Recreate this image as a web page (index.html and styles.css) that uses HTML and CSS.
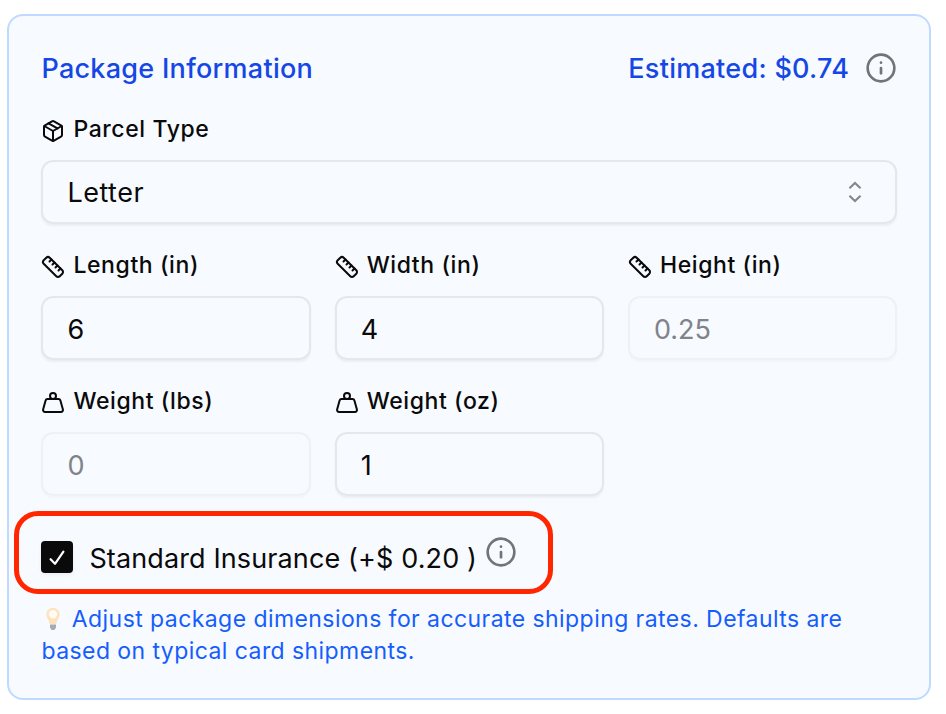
FILE: index.html
```html
<!DOCTYPE html>
<html lang="en">
	<head>
		<meta charset="UTF-8" />
		<meta name="viewport" content="width=device-width, initial-scale=1.0" />
		<title>Package Information</title>
		<link rel="stylesheet" href="styles.css">
	</head>
	<body>
		<!-- shared icons -->
		<svg class="sprite" aria-hidden="true">
			<symbol id="info" viewBox="0 0 24 24">
				<circle cx="12" cy="12" r="10" />
				<path d="M12 16v-4" />
				<path d="M12 8h.01" />
			</symbol>
			<symbol id="box" viewBox="0 0 24 24">
				<path d="M11 21.73a2 2 0 0 0 2 0l7-4A2 2 0 0 0 21 16V8a2 2 0 0 0-1-1.73l-7-4a2 2 0 0 0-2 0l-7 4A2 2 0 0 0 3 8v8a2 2 0 0 0 1 1.73z" />
				<path d="M12 22V12" />
				<path d="m3.3 7 8.7 5 8.7-5" />
				<path d="m7.5 4.27 9 5.15" />
			</symbol>
			<symbol id="ruler" viewBox="0 0 24 24">
				<path d="M21.3 15.3a2.4 2.4 0 0 1 0 3.4l-2.6 2.6a2.4 2.4 0 0 1-3.4 0L2.7 8.7a2.41 2.41 0 0 1 0-3.4l2.6-2.6a2.41 2.41 0 0 1 3.4 0Z" />
				<path d="m14.5 12.5 2-2" />
				<path d="m11.5 9.5 2-2" />
				<path d="m8.5 6.5 2-2" />
				<path d="m17.5 15.5 2-2" />
			</symbol>
			<symbol id="weight" viewBox="0 0 24 24">
				<circle cx="12" cy="5" r="3" />
				<path d="M6.5 8a2 2 0 0 0-1.905 1.46L2.1 18.5A2 2 0 0 0 4 21h16a2 2 0 0 0 1.925-2.54L19.4 9.5A2 2 0 0 0 17.48 8Z" />
			</symbol>
		</svg>

		<div class="card">
			<div class="card-header">
				<h2 class="title">Package Information</h2>
				<div class="estimate">
					<span class="price">Estimated: $0.74</span>
					<svg class="info-icon"><use href="#info" /></svg>
				</div>
			</div>

			<div class="field">
				<div class="label"><svg class="icon"><use href="#box" /></svg><span>Parcel Type</span></div>
				<div class="input select">
					<span class="letter">Letter</span>
					<svg class="chevrons" viewBox="0 0 15 15">
						<path d="M4.9 5.7 7.5 3.3l2.6 2.4" />
						<path d="m4.9 9.3 2.6 2.4 2.6-2.4" />
					</svg>
				</div>
			</div>

			<div class="grid">
				<div class="field">
					<div class="label"><svg class="icon"><use href="#ruler" /></svg><span>Length (in)</span></div>
					<div class="input">6</div>
				</div>
				<div class="field">
					<div class="label"><svg class="icon"><use href="#ruler" /></svg><span>Width (in)</span></div>
					<div class="input">4</div>
				</div>
				<div class="field">
					<div class="label"><svg class="icon"><use href="#ruler" /></svg><span>Height (in)</span></div>
					<div class="input disabled">0.25</div>
				</div>
				<div class="field">
					<div class="label"><svg class="icon"><use href="#weight" /></svg><span>Weight (lbs)</span></div>
					<div class="input disabled">0</div>
				</div>
				<div class="field">
					<div class="label"><svg class="icon"><use href="#weight" /></svg><span>Weight (oz)</span></div>
					<div class="input">1</div>
				</div>
			</div>

			<div class="insurance">
				<div class="highlight"></div>
				<div class="checkbox">
					<svg class="check" viewBox="0 0 24 24"><path d="M5.6 14.2 10 18.8 18.4 6.6" /></svg>
				</div>
				<span class="insurance-text">Standard Insurance (+$ 0.20 )</span>
				<svg class="info-icon raised"><use href="#info" /></svg>
			</div>

			<p class="hint">
				<svg class="bulb" viewBox="0 0 16 24">
					<path class="glass" d="M8 .8A6.7 6.7 0 0 0 1.3 7.5c0 3.4 2.8 4.8 3.3 9.5h6.8c.5-4.7 3.3-6.1 3.3-9.5A6.7 6.7 0 0 0 8 .8Z" />
					<circle class="glow" cx="8" cy="7.3" r="4.2" />
					<path class="base" d="M5 17.4h6v3L9.4 23H6.6L5 20.4Z" />
				</svg>
				Adjust package dimensions for accurate shipping rates. Defaults are based on typical card shipments.
			</p>
		</div>
	</body>
</html>
```

FILE: styles.css
```css
* {
	margin: 0;
	padding: 0;
	box-sizing: border-box;
}

body {
	font-family: Inter, "Liberation Sans", sans-serif;
	background-color: #ffffff;
	color: #0a0a0a;
	padding: 14px 15px 0 7px;
}

.sprite {
	position: absolute;
	width: 0;
	height: 0;
}

.card {
	height: 686px;
	padding: 32px 31.8px 32px 32.4px;
	border: 2px solid #bedbff;
	border-radius: 16px;
	background-color: #f7faff;
}

.card-header {
	display: flex;
	justify-content: space-between;
	align-items: center;
	height: 40px;
	margin-bottom: 29px;
	color: #1447e6;
}

.title,
.price {
	padding-top: 2px;
	font-size: 27px;
	font-weight: 500;
	line-height: 38px;
	letter-spacing: 0.28px;
}

.estimate {
	display: flex;
	align-items: center;
	gap: 16px;
}

.info-icon {
	width: 32px;
	height: 32px;
	fill: none;
	stroke: #70747b;
	stroke-width: 2;
	stroke-linecap: round;
	stroke-linejoin: round;
}

.label {
	display: flex;
	align-items: center;
	gap: 8px;
	height: 24px;
	margin-bottom: 19px;
	font-size: 23px;
	font-weight: 500;
	line-height: 24px;
	letter-spacing: 0.6px;
	white-space: nowrap;
}

.icon {
	width: 24px;
	height: 24px;
	margin-top: 4px;
	fill: none;
	stroke: #0a0a0a;
	stroke-width: 2;
	stroke-linecap: round;
	stroke-linejoin: round;
}

.input {
	display: flex;
	align-items: center;
	height: 64px;
	padding: 2px 24px 0;
	border: 2px solid #e5e7eb;
	border-radius: 12px;
	box-shadow: 0 2px 2px rgba(0, 0, 0, 0.05);
	font-size: 27px;
}

.select {
	justify-content: space-between;
	margin-bottom: 29px;
	padding-top: 0;
	letter-spacing: 0.5px;
}

.chevrons {
	width: 32px;
	height: 32px;
	fill: none;
	stroke: #858789;
	stroke-width: 1;
}

.disabled {
	border-color: #eef1f5;
	box-shadow: 0 2px 2px rgba(0, 0, 0, 0.025);
	color: #808389;
}

.grid {
	display: grid;
	grid-template-columns: repeat(3, 1fr);
	gap: 29px 24px;
}

.insurance {
	position: relative;
	display: flex;
	align-items: center;
	height: 32px;
	margin: 45px 0 30px;
}

/* red marker drawn round the insurance option */
.highlight {
	position: absolute;
	left: -27.4px;
	top: -30px;
	width: 539px;
	height: 83px;
	border: 5px solid #ff2600;
	border-radius: 24px;
}

.checkbox {
	display: flex;
	justify-content: center;
	align-items: center;
	width: 32px;
	height: 32px;
	border-radius: 4px;
	background-color: #0a0a0a;
	box-shadow: 0 2px 4px rgba(0, 0, 0, 0.05);
}

.check {
	width: 24px;
	height: 24px;
	fill: none;
	stroke: #ffffff;
	stroke-width: 2.2;
	stroke-linecap: round;
	stroke-linejoin: round;
}

.insurance-text {
	margin-left: 16px;
	padding-top: 2px;
	font-size: 27px;
	letter-spacing: 0.12px;
}

.raised {
	margin: -10px 0 0 8px;
}

.hint {
	font-size: 23px;
	line-height: 32px;
	letter-spacing: 0.43px;
	color: #155dfc;
}

.bulb {
	width: 16px;
	height: 24px;
	margin: 0 3.5px 0 4px;
	vertical-align: -4px;
}

.glass {
	fill: #fde3bd;
}

.glow {
	fill: #fffaf2;
}

.base {
	fill: #a9abae;
}
```
